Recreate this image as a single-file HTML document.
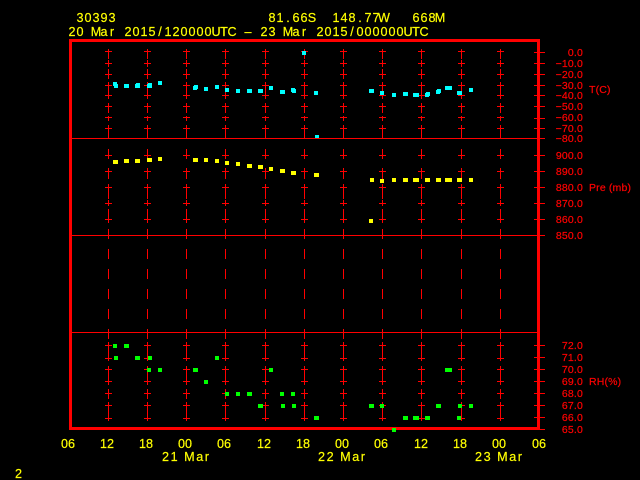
<!DOCTYPE html>
<html>
<head>
<meta charset="utf-8">
<title>30393</title>
<style>
html,body{margin:0;padding:0;background:#000;width:640px;height:480px;overflow:hidden}
svg{display:block}
text{font-family:"Liberation Sans",sans-serif;white-space:pre}
.y{fill:#ff0;stroke:#ff0;stroke-width:.2px;font-size:12.6px}
.r{fill:#f00;stroke:#f00;stroke-width:.2px;font-size:10.5px;letter-spacing:.16px}
.e{text-anchor:end}
.m{text-anchor:middle}
</style>
</head>
<body>
<svg width="640" height="480" viewBox="0 0 640 480" xmlns="http://www.w3.org/2000/svg">
<rect width="640" height="480" fill="#000"/>
<defs>
<path id="col" fill="#f00" shape-rendering="crispEdges" d="M0 49h1v10h-1zM0 60h1v7h-1zM0 69h1v10h-1zM0 82h1v17h-1zM0 103h1v10h-1zM0 116h1v5h-1zM0 125h1v14h-1zM0 149h1v10h-1zM0 168h1v11h-1zM0 184h1v15h-1zM0 200h1v6h-1zM0 209h1v14h-1zM0 229h1v10h-1zM0 249h1v10h-1zM0 269h1v10h-1zM0 289h1v10h-1zM0 309h1v10h-1zM0 329h1v10h-1zM0 342h1v19h-1zM0 366h1v19h-1zM0 389h1v10h-1zM0 402h1v19h-1zM-3 51h7v1h-7zM-3 63h7v1h-7zM-3 74h7v1h-7zM-3 85h7v1h-7zM-3 95h7v1h-7zM-3 106h7v1h-7zM-3 117h7v1h-7zM-3 128h7v1h-7zM-3 155h7v1h-7zM-3 171h7v1h-7zM-3 187h7v1h-7zM-3 203h7v1h-7zM-3 219h7v1h-7zM-3 345h7v1h-7zM-3 358h7v1h-7zM-3 369h7v1h-7zM-3 381h7v1h-7zM-3 393h7v1h-7zM-3 405h7v1h-7zM-3 418h7v1h-7z"/>
</defs>
<use href="#col" x="108"/><use href="#col" x="147"/><use href="#col" x="186"/><use href="#col" x="225"/><use href="#col" x="265"/><use href="#col" x="304"/><use href="#col" x="343"/><use href="#col" x="382"/><use href="#col" x="421"/><use href="#col" x="461"/><use href="#col" x="500"/>
<path fill="#f00" shape-rendering="crispEdges" d="M72 138h473v1h-473zM72 235h473v1h-473zM72 332h465v1h-465zM534 52h11v1h-11zM534 63h11v1h-11zM534 74h11v1h-11zM534 85h11v1h-11zM534 95h11v1h-11zM534 106h11v1h-11zM534 118h11v1h-11zM534 128h11v1h-11zM534 155h11v1h-11zM534 171h11v1h-11zM534 187h11v1h-11zM534 203h11v1h-11zM534 219h11v1h-11zM534 345h11v1h-11zM534 357h11v1h-11zM534 369h11v1h-11zM534 381h11v1h-11zM534 393h11v1h-11zM534 405h11v1h-11zM534 417h11v1h-11zM534 429h11v1h-11zM69 39h471v3h-471zM69 427h471v3h-471zM69 39h3v391h-3zM537 39h3v391h-3z"/>
<path fill="#0ff" shape-rendering="crispEdges" d="M113 82h4v4h-4zM114 84h4v4h-4zM124 84h5v4h-5zM135 84h5v4h-5zM136 83h4v4h-4zM147 84h5v4h-5zM148 83h4v4h-4zM158 81h4v4h-4zM193 86h4v4h-4zM194 85h4v4h-4zM204 87h4v4h-4zM215 85h4v4h-4zM225 88h4v4h-4zM236 89h4v4h-4zM247 89h5v4h-5zM258 89h5v4h-5zM269 86h4v4h-4zM280 90h5v4h-5zM291 88h4v4h-4zM292 89h4v4h-4zM302 51h4v4h-4zM314 91h4v4h-4zM315 135h4v3h-4zM369 89h5v4h-5zM380 91h4v4h-4zM392 93h4v4h-4zM403 92h5v4h-5zM413 93h6v4h-6zM425 93h4v4h-4zM426 92h4v4h-4zM436 90h4v4h-4zM437 89h4v4h-4zM445 86h7v4h-7zM457 91h5v4h-5zM469 88h4v4h-4z"/>
<path fill="#ff0" shape-rendering="crispEdges" d="M113 160h5v4h-5zM124 159h5v4h-5zM135 159h5v4h-5zM147 158h5v4h-5zM158 157h4v4h-4zM193 158h5v4h-5zM204 158h4v4h-4zM215 159h4v4h-4zM225 161h4v4h-4zM236 162h4v4h-4zM247 164h5v4h-5zM258 165h5v4h-5zM269 167h4v4h-4zM280 169h5v4h-5zM291 171h5v4h-5zM314 173h5v4h-5zM370 178h4v4h-4zM380 179h4v4h-4zM392 178h4v4h-4zM403 178h5v4h-5zM413 178h6v4h-6zM425 178h5v4h-5zM436 178h5v4h-5zM445 178h7v4h-7zM457 178h5v4h-5zM469 178h4v4h-4zM369 219h4v4h-4z"/>
<path fill="#0f0" shape-rendering="crispEdges" d="M113 344h4v4h-4zM124 344h5v4h-5zM114 356h4v4h-4zM135 356h5v4h-5zM148 356h4v4h-4zM147 368h4v4h-4zM158 368h4v4h-4zM193 368h5v4h-5zM204 380h4v4h-4zM215 356h4v4h-4zM225 392h4v4h-4zM236 392h4v4h-4zM247 392h5v4h-5zM258 404h5v4h-5zM269 368h4v4h-4zM280 392h4v4h-4zM291 392h4v4h-4zM281 404h4v4h-4zM292 404h4v4h-4zM314 416h5v4h-5zM369 404h5v4h-5zM380 404h4v4h-4zM392 428h4v4h-4zM403 416h5v4h-5zM413 416h6v4h-6zM425 416h5v4h-5zM436 404h5v4h-5zM445 368h7v4h-7zM458 404h4v4h-4zM469 404h4v4h-4zM457 416h4v4h-4z"/>

<text class="y m" y="22" x="80 88 96 104 112">30393</text>
<text class="y m" y="22" x="272 280 288 296 304 312 320 328 336 344 352 360 368 376 384 392 400 408 416 424 432 440">81.66S  148.77W   668M</text>
<text class="y m" y="36" x="72 80 88 96 104 112 120 128 136 144 152 160 168 176 184 192 200 208 216 224 232 240 248 256 264 272 280 288 296 304 312 320 328 336 344 352 360 368 376 384 392 400 408 416 424">20 Mar 2015/120000UTC – 23 Mar 2015/000000UTC</text>

<text class="r e" x="583" y="56">0.0</text>
<text class="r e" x="583" y="67">−10.0</text>
<text class="r e" x="583" y="78">−20.0</text>
<text class="r e" x="583" y="89">−30.0</text>
<text class="r e" x="583" y="99">−40.0</text>
<text class="r e" x="583" y="110">−50.0</text>
<text class="r e" x="583" y="121">−60.0</text>
<text class="r e" x="583" y="132">−70.0</text>
<text class="r e" x="583" y="142">−80.0</text>
<text class="r e" x="583" y="159">900.0</text>
<text class="r e" x="583" y="175">890.0</text>
<text class="r e" x="583" y="191">880.0</text>
<text class="r e" x="583" y="207">870.0</text>
<text class="r e" x="583" y="223">860.0</text>
<text class="r e" x="583" y="239">850.0</text>
<text class="r e" x="583" y="349">72.0</text>
<text class="r e" x="583" y="361">71.0</text>
<text class="r e" x="583" y="373">70.0</text>
<text class="r e" x="583" y="385">69.0</text>
<text class="r e" x="583" y="397">68.0</text>
<text class="r e" x="583" y="409">67.0</text>
<text class="r e" x="583" y="421">66.0</text>
<text class="r e" x="583" y="433">65.0</text>
<text class="r" x="589" y="93">T(C)</text>
<text class="r" x="589" y="191">Pre (mb)</text>
<text class="r" x="589" y="385">RH(%)</text>

<text class="y m" y="448" x="68">06</text>
<text class="y m" y="448" x="107">12</text>
<text class="y m" y="448" x="146">18</text>
<text class="y m" y="448" x="185">00</text>
<text class="y m" y="448" x="224">06</text>
<text class="y m" y="448" x="264">12</text>
<text class="y m" y="448" x="303">18</text>
<text class="y m" y="448" x="342">00</text>
<text class="y m" y="448" x="381">06</text>
<text class="y m" y="448" x="421">12</text>
<text class="y m" y="448" x="460">18</text>
<text class="y m" y="448" x="499">00</text>
<text class="y m" y="448" x="539">06</text>
<text class="y" x="162" y="461" textLength="47">21 Mar</text>
<text class="y" x="318" y="461" textLength="47">22 Mar</text>
<text class="y" x="475" y="461" textLength="47">23 Mar</text>
<text class="y" x="15" y="478">2</text>
</svg>
</body>
</html>
